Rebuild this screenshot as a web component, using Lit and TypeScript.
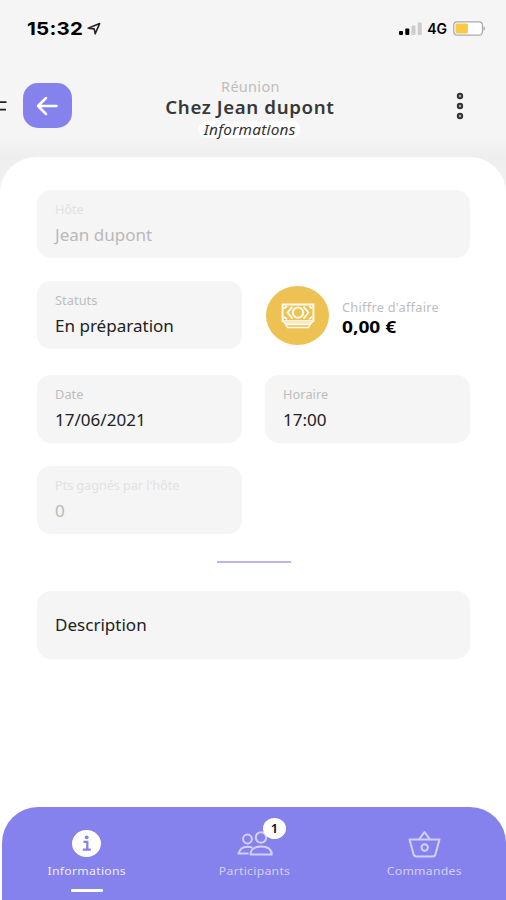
import { LitElement, html, css, svg } from "lit";
import { customElement, property } from "lit/decorators.js";

@customElement("info-field")
class InfoField extends LitElement {
  @property() label = "";
  @property() value = "";
  @property({ type: Boolean, reflect: true }) disabled = false;
  static styles = css`
    :host { display: flex; flex-direction: column; justify-content: center; box-sizing: border-box; height: 68px; padding: 0 18px; border-radius: 14px; background: #f5f5f5; }
    .label, .value { transform: scaleX(1.065); transform-origin: left; white-space: nowrap; }
    .label { font-size: 12px; line-height: 18px; letter-spacing: .05px; color: #bdbdbd; margin-top: -2px; }
    .value { font-size: 16px; line-height: 22px; color: #222; margin-top: 5px; }
    .value.only { margin-top: -1px; }
    :host([disabled]) .label { color: #e2e2e2; letter-spacing: -.1px; }
    :host([disabled]) .value { color: #b9b9b9; }
  `;
  render() {
    return html`${this.label ? html`<div class="label">${this.label}</div>` : null}
      <div class="value ${this.label ? "" : "only"}">${this.value}</div>`;
  }
}

@customElement("app-root")
class AppRoot extends LitElement {
  static styles = css`
    :host { display: flex; flex-direction: column; width: 506px; height: 900px; overflow: hidden; background: linear-gradient(#f5f5f5 135px, #eeeeee 157px, #f3f3f3 200px); font-family: "Noto Sans", "Open Sans", sans-serif; }
    svg { display: block; }
    .status { display: flex; align-items: center; height: 57px; padding: 0 20px 0 27px; box-sizing: border-box; }
    .time { width: 56px; font: 700 18px/24px Inter, sans-serif; letter-spacing: .2px; color: #000; transform: scaleX(1.14); transform-origin: left; }
    .loc { margin-left: 4px; }
    .signal { margin-left: auto; }
    .net { font: 600 14px/20px Inter, sans-serif; margin: 0 6px 0 5px; color: #000; }
    .header { display: flex; align-items: center; height: 100px; box-sizing: border-box; padding-right: 38px; justify-content: space-between; }
    .left { display: flex; align-items: center; gap: 15.5px; width: 143px; margin-top: -3px; }
    .back { display: grid; place-items: center; width: 49px; height: 45px; border-radius: 15px; background: #8582ed; }
    .back svg { margin-right: 1px; }
    .titles { display: flex; flex-direction: column; align-items: center; white-space: nowrap; margin-top: 1px; }
    .kind { font-size: 13.5px; line-height: 18px; letter-spacing: .3px; color: #bdbdbd; transform: scaleX(1.07); }
    .name { font-size: 17px; line-height: 23px; letter-spacing: .55px; font-weight: 600; color: #383838; transform: scaleX(1.1); }
    .tab { font-size: 14px; line-height: 17px; font-style: italic; background: #fff; border-radius: 9px; padding: 0 5px; margin-top: 2px; letter-spacing: .2px; color: #333; transform: scaleX(1.1); }
    .right { display: flex; justify-content: flex-end; width: 111px; margin-top: -2px; }
    .sheet { flex: 1; display: flex; flex-direction: column; background: #fff; border-radius: 36px 36px 0 0; padding: 33px 36px 0 37px; }
    .grid { display: grid; grid-template-columns: 205px 205px; grid-template-rows: 68px 71px 68px 68px; gap: 23px; align-items: start; }
    .wide { grid-column: 1 / 3; }
    .first { grid-column: 1; }
    .revenue { display: flex; align-items: center; gap: 13px; height: 68px; white-space: nowrap; }
    .coin { display: grid; place-items: center; width: 63px; height: 59px; border-radius: 50%; background: #edc152; flex: none; margin: 1px 0 0 1px; }
    .rlabel { font-size: 12px; line-height: 18px; letter-spacing: .25px; color: #bdbdbd; margin-top: 5px; transform: scaleX(1.065); transform-origin: left; }
    .amount { font-size: 16.5px; line-height: 20px; font-weight: 700; color: #000; transform: scaleX(1.16); transform-origin: left; }
    .rule { align-self: center; width: 74px; height: 2px; background: #bcb6ea; margin: 27px 0 28px; }
    .nav { display: grid; grid-template-columns: 168px 169px 169px; height: 93px; margin-left: 2px; background: #8582ed; border-radius: 36px 36px 0 0; color: #d2d0fa; }
    .bottom { background: #fff; }
    .item { display: flex; flex-direction: column; align-items: center; padding: 21px 0 0 1px; font-size: 11.5px; letter-spacing: .25px; white-space: nowrap; }
    .item.on { color: #fff; }
    .item.on .txt { color: #eeedfd; }
    .icon { position: relative; height: 31px; display: grid; place-items: center; }
    .txt { line-height: 18px; margin-top: 3px; transform: scaleX(1.065); }
    .bar { width: 32px; height: 3px; border-radius: 1px; background: #fff; margin-top: 9px; }
    .badge { position: absolute; left: 26px; top: -10px; width: 23px; height: 21px; border-radius: 50%; background: #fff; color: #111; font-weight: 600; font-size: 13px; line-height: 21px; text-align: center; letter-spacing: 0; }
  `;

  render() {
    return html`
      <div class="status">
        <div class="time">15:32</div>
        <svg class="loc" width="14" height="14" viewBox="0 0 14 14"><path d="M1.2 6.3 12.6 1.6 8.2 11.8 7.2 6.9Z" fill="none" stroke="#222" stroke-width="1.6" stroke-linejoin="round"/></svg>
        <svg class="signal" width="23" height="14" viewBox="0 0 23 14">
          <rect x="0" y="9" width="4" height="4" rx="1"/><rect x="6.3" y="6.5" width="4" height="6.5" rx="1"/>
          <rect x="12.5" y="3.5" width="4" height="9.5" rx="1" fill="#ccc"/><rect x="18.7" y="0.5" width="4" height="12.5" rx="1" fill="#ccc"/>
        </svg>
        <div class="net">4G</div>
        <svg width="33" height="15" viewBox="0 0 33 15">
          <rect x=".8" y=".8" width="28.6" height="13.4" rx="3.5" fill="#fff" stroke="#aaa" stroke-width="1.2"/>
          <rect x="2.5" y="2.5" width="12.5" height="10" rx="1.5" fill="#f8ca45"/><path d="M30.6 5Q33 7.5 30.6 10Z" fill="#888"/>
        </svg>
      </div>
      <div class="header">
        <div class="left">
          <svg width="7" height="10" viewBox="0 0 7 10"><path d="M0 1.2H6.5M0 8.6H6" stroke="#222" stroke-width="1.8"/></svg>
          <div class="back"><svg width="22" height="20" viewBox="0 0 22 20"><path d="M20.5 10H2M10 2 2 10 10 18" fill="none" stroke="#fff" stroke-width="2.5" stroke-linecap="round" stroke-linejoin="round"/></svg></div>
        </div>
        <div class="titles">
          <div class="kind">Réunion</div>
          <div class="name">Chez Jean dupont</div>
          <div class="tab">Informations</div>
        </div>
        <div class="right"><svg width="16" height="28" viewBox="0 0 16 28">${[4, 14, 24].map((y) => svg`<circle cx="8" cy=${y} r="2.2" fill="#aaa" stroke="#333" stroke-width="2"/>`)}</svg></div>
      </div>
      <div class="sheet">
        <div class="grid">
          <info-field class="wide" label="Hôte" value="Jean dupont" disabled></info-field>
          <info-field label="Statuts" value="En préparation"></info-field>
          <div class="revenue">
            <div class="coin">
              <svg width="34" height="26" viewBox="0 0 34 26" fill="none" stroke="#fffaf0">
                <path d="M1.6 1.5H32.4V18H1.6Z" stroke-width="2"/>
                <circle cx="17" cy="9.6" r="5.2" stroke-width="2"/>
                <path d="M11.5 3.6 6.5 9.6 11.5 15.6M22.5 3.6 27.5 9.6 22.5 15.6" stroke-width="1.8"/>
                <path d="M3 5.6 6 3M31 5.6 28 3M3 13.8 6 16.2M31 13.8 28 16.2" stroke-width="2"/>
                <path d="M1.5 17.5H32.5L29.5 22H4.5Z" fill="#fbeac0" stroke="none"/>
                <path d="M2 18.2 5 21.6H29L32 18.2M5 22 6.5 24.6H27.5L29 22" stroke-width="1.5"/>
              </svg>
            </div>
            <div><div class="rlabel">Chiffre d'affaire</div><div class="amount">0,00 €</div></div>
          </div>
          <info-field label="Date" value="17/06/2021"></info-field>
          <info-field label="Horaire" value="17:00"></info-field>
          <info-field class="first" label="Pts gagnés par l'hôte" value="0" disabled></info-field>
        </div>
        <div class="rule"></div>
        <info-field value="Description"></info-field>
      </div>
      <div class="bottom"><div class="nav">
        <div class="item on">
          <div class="icon"><svg width="29" height="27" viewBox="0 0 29 27"><ellipse cx="14.5" cy="13.5" rx="14.5" ry="13.5" fill="#fff"/><circle cx="14.7" cy="7.3" r="1.9" fill="#8582ed"/><path d="M11.5 11.8H15.3V19.5M10.8 19.6H18.8" fill="none" stroke="#8582ed" stroke-width="2.3"/></svg></div>
          <div class="txt">Informations</div><div class="bar"></div>
        </div>
        <div class="item">
          <div class="icon">
            <svg width="36" height="26" viewBox="0 0 36 26" fill="none" stroke="currentColor" stroke-width="2"><circle cx="10.5" cy="8" r="4.4"/><circle cx="24" cy="6.5" r="5.2"/><path d="M15.5 16.6Q4 13.5 1.5 22.6H11.5M13.5 23.5Q14 15.5 24.2 15.5T34.8 23.5Z" stroke-linejoin="round"/></svg>
            <div class="badge">1</div>
          </div>
          <div class="txt">Participants</div>
        </div>
        <div class="item">
          <div class="icon"><svg width="33" height="28" viewBox="0 0 33 28" fill="none" stroke="currentColor" stroke-width="2" stroke-linejoin="round"><path d="M1.5 9.5H31.5L27.5 24Q27 26.5 24.5 26.5H8.5Q6 26.5 5.5 24ZM11 9.5 16.5 2 22 9.5"/><circle cx="16.7" cy="17.5" r="3.2"/></svg></div>
          <div class="txt">Commandes</div>
        </div>
      </div></div>
    `;
  }
}
